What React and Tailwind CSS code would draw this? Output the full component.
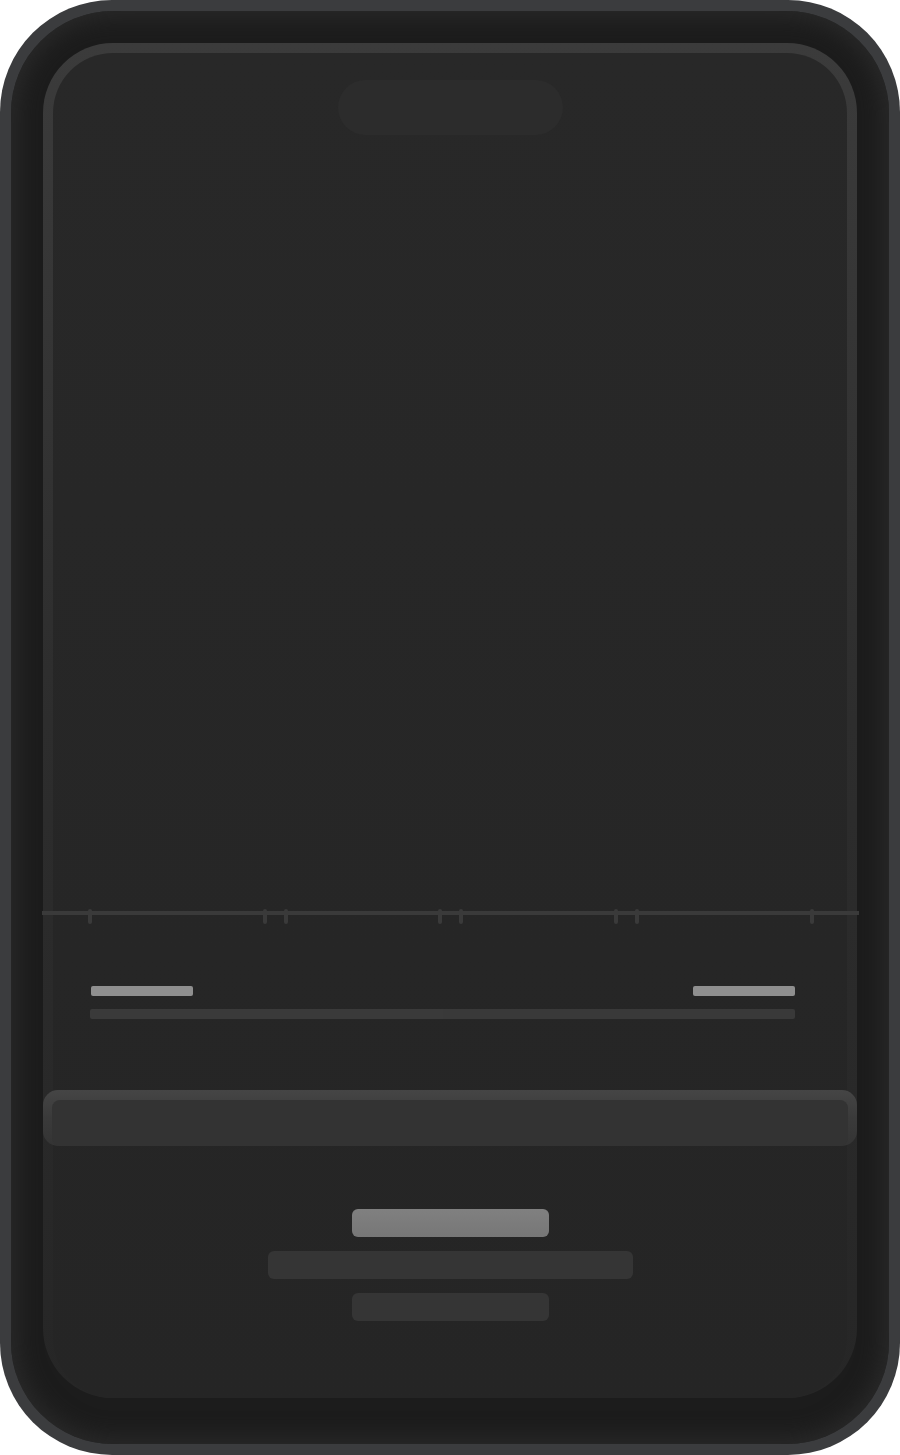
import React from "react";

const TICKS = [46, 221, 242, 396, 417, 572, 593, 768];

function Timeline() {
  return (
    <div className="relative -ml-[11px] -mr-[12px] mt-[776px] h-[4px] bg-[#3a3a3a]">
      {TICKS.map((left) => (
        <span
          key={left}
          className="absolute top-[-2px] h-[15px] w-[4px] rounded-full bg-[#3a3a3a]"
          style={{ left }}
        />
      ))}
    </div>
  );
}

export default function App() {
  return (
    <div className="h-[1455px] w-[900px] bg-white">
      {/* outer frame */}
      <div className="h-full w-full rounded-[112px] bg-[#3b3c3e] p-[11px]">
        {/* bezel */}
        <div className="h-full w-full rounded-[102px] bg-[#1c1c1c] px-[32px] pt-[32px] pb-[46px] shadow-[inset_0_0_22px_6px_#2a2a2a]">
          {/* screen ring */}
          <div className="h-full rounded-[70px] bg-gradient-to-b from-[#3b3b3b] via-[#2d2d2d] to-[#262626] px-[10px] pt-[10px]">
            <div className="flex h-full flex-col rounded-[60px] bg-gradient-to-b from-[#282828] to-[#252525]">
              {/* dynamic island */}
              <div className="mx-auto mt-[27px] h-[55px] w-[225px] rounded-full bg-[#2c2c2c]" />

              <Timeline />

              <div className="ml-[38px] mr-[52px] mt-[71px] flex justify-between">
                <div className="h-[10px] w-[102px] rounded-[2px] bg-[#8f8f8f]" />
                <div className="h-[10px] w-[102px] rounded-[2px] bg-[#8f8f8f]" />
              </div>
              <div className="ml-[37px] mr-[52px] mt-[13px] flex">
                <div className="h-[10px] flex-1 rounded-l-[2px] bg-[#3a3a3a]" />
                <div className="h-[10px] flex-1 rounded-r-[2px] bg-[#393939]" />
              </div>

              {/* input */}
              <div className="-mx-[10px] mt-[71px] rounded-[15px] bg-gradient-to-b from-[#454545] via-[#3a3a3a] to-[#343434] px-[9px] pt-[10px]">
                <div className="h-[46px] rounded-[8px] bg-[#333333]" />
              </div>

              {/* actions */}
              <div className="mt-[63px] flex flex-col items-center gap-[14px]">
                <div className="h-[28px] w-[197px] rounded-[6px] bg-gradient-to-b from-[#808080] to-[#777777]" />
                <div className="h-[28px] w-[365px] rounded-[6px] bg-[#353535]" />
                <div className="h-[28px] w-[197px] rounded-[6px] bg-[#353535]" />
              </div>
            </div>
          </div>
        </div>
      </div>
    </div>
  );
}
